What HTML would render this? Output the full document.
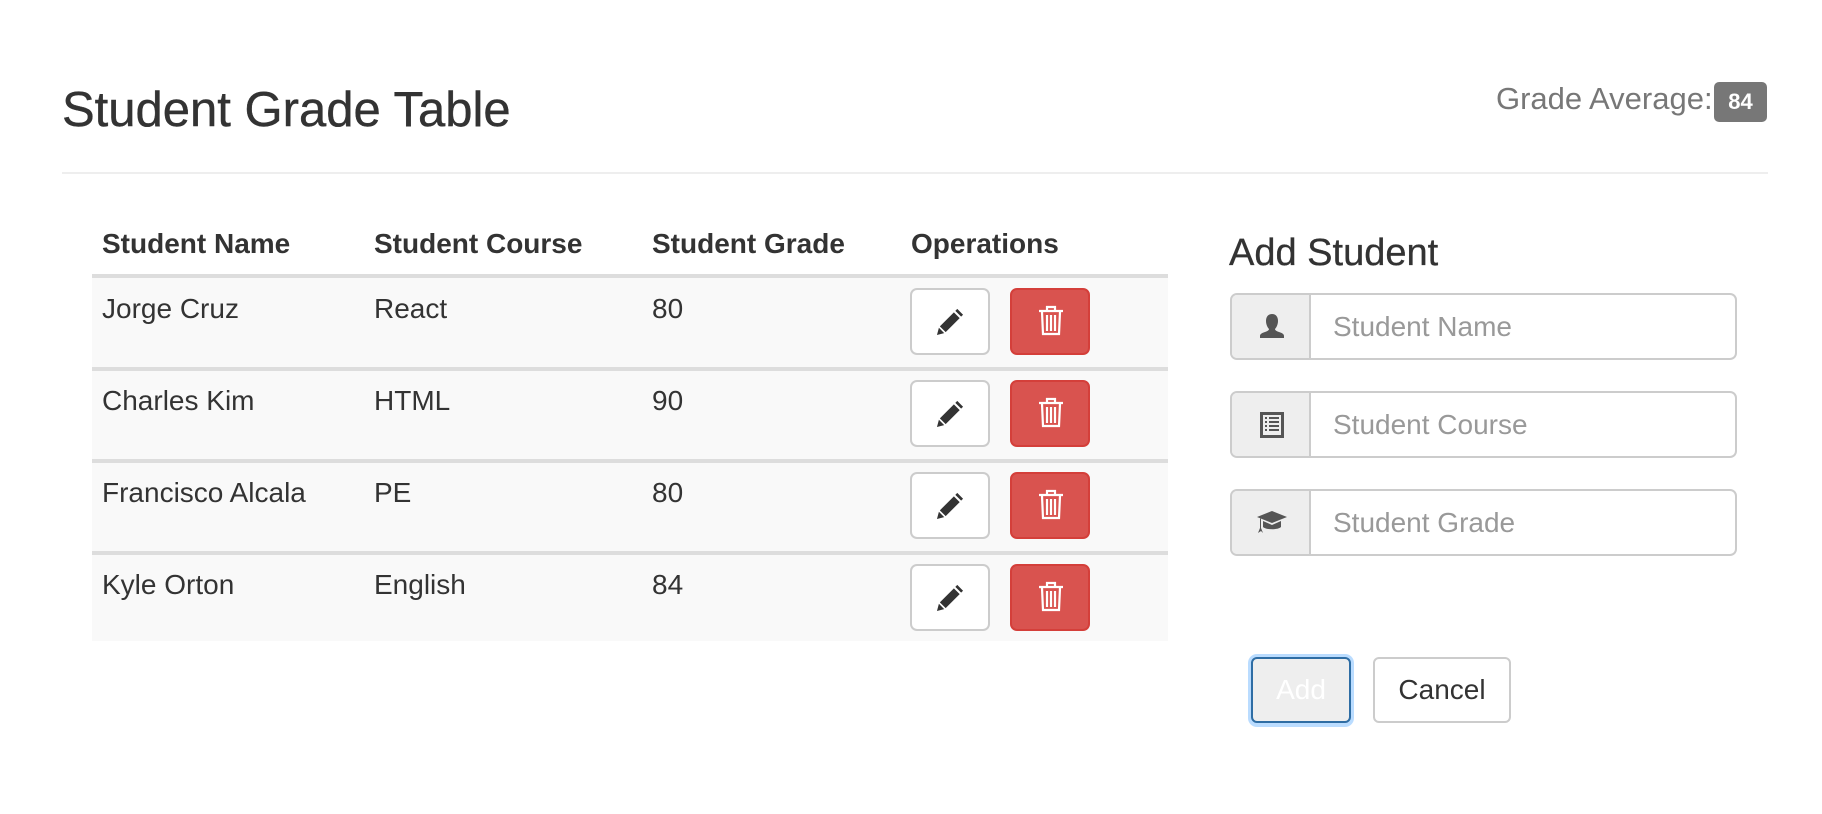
<!DOCTYPE html>
<html><head><meta charset="utf-8"><style>
*{box-sizing:border-box;margin:0;padding:0}
body{width:1822px;height:814px;background:#fff;font-family:"Liberation Sans",Arial,sans-serif;color:#333;position:relative;overflow:hidden}
.a{position:absolute}
.t{font-size:28px;line-height:28px;white-space:nowrap}
.h{font-weight:bold}
.row{position:absolute;left:92px;width:1076px;background:#f9f9f9;border-top:4px solid #ddd}
.eb{position:absolute;width:80px;height:67px;border:2px solid #ccc;border-radius:7px;background:#fff}
.db{position:absolute;width:80px;height:67px;border:2px solid #d43f3a;border-radius:7px;background:#d9534f}
.ig{position:absolute;left:1230px;width:507px;height:67px;border:2px solid #ccc;border-radius:7px;background:#fff;overflow:hidden}
.ad{position:absolute;left:0;top:0;width:79px;height:100%;background:#eee;border-right:2px solid #ccc}
.ph{position:absolute;left:101px;top:17px;font-size:28px;color:#999;line-height:29px;white-space:nowrap}
</style></head><body>
<div class="a" style="left:62px;top:84px;font-size:49px;line-height:52px;white-space:nowrap;-webkit-text-stroke:0.4px">Student Grade Table</div>
<div class="a" style="left:1496px;top:82px;font-size:31px;line-height:34px;color:#777;white-space:nowrap">Grade Average:</div>
<div class="a" style="left:1714px;top:82px;width:53px;height:40px;background:#777;border-radius:5px;color:#fff;font-weight:bold;font-size:22px;line-height:40px;text-align:center">84</div>
<div class="a" style="left:62px;top:172px;width:1706px;height:2px;background:#eee"></div>

<div class="a t h" style="left:102px;top:230px">Student Name</div>
<div class="a t h" style="left:374px;top:230px">Student Course</div>
<div class="a t h" style="left:652px;top:230px">Student Grade</div>
<div class="a t h" style="left:911px;top:230px">Operations</div>

<svg width="0" height="0" style="position:absolute"><defs>
<symbol id="pen" viewBox="0 0 30 30"><path d="M22 2l6 6-2 2-6-6zM18.5 5.5l6 6L10 26l-6-6zM3 21.5l5.5 5.5L1 29z" fill="#333"/></symbol>
<symbol id="trash" viewBox="0 0 26 32"><g fill="none" stroke="#fff" stroke-width="2.2"><path d="M1 7h24M9 7V3h8v4M4 8l1 22h16l1-22M9 11v16M13 11v16M17 11v16"/></g></symbol>
</defs></svg>

<div class="row" style="top:274px;height:93px"></div>
<div class="row" style="top:367px;height:92px"></div>
<div class="row" style="top:459px;height:92px"></div>
<div class="row" style="top:551px;height:90px"></div>

<div class="a t" style="left:102px;top:295px">Jorge Cruz</div>
<div class="a t" style="left:374px;top:295px">React</div>
<div class="a t" style="left:652px;top:295px">80</div>
<div class="a t" style="left:102px;top:387px">Charles Kim</div>
<div class="a t" style="left:374px;top:387px">HTML</div>
<div class="a t" style="left:652px;top:387px">90</div>
<div class="a t" style="left:102px;top:479px">Francisco Alcala</div>
<div class="a t" style="left:374px;top:479px">PE</div>
<div class="a t" style="left:652px;top:479px">80</div>
<div class="a t" style="left:102px;top:571px">Kyle Orton</div>
<div class="a t" style="left:374px;top:571px">English</div>
<div class="a t" style="left:652px;top:571px">84</div>

<div class="eb" style="left:910px;top:288px"><svg class="a" style="left:24px;top:17px" width="29" height="29"><use href="#pen"/></svg></div>
<div class="db" style="left:1010px;top:288px"><svg class="a" style="left:26px;top:14px" width="26" height="32"><use href="#trash"/></svg></div>
<div class="eb" style="left:910px;top:380px"><svg class="a" style="left:24px;top:17px" width="29" height="29"><use href="#pen"/></svg></div>
<div class="db" style="left:1010px;top:380px"><svg class="a" style="left:26px;top:14px" width="26" height="32"><use href="#trash"/></svg></div>
<div class="eb" style="left:910px;top:472px"><svg class="a" style="left:24px;top:17px" width="29" height="29"><use href="#pen"/></svg></div>
<div class="db" style="left:1010px;top:472px"><svg class="a" style="left:26px;top:14px" width="26" height="32"><use href="#trash"/></svg></div>
<div class="eb" style="left:910px;top:564px"><svg class="a" style="left:24px;top:17px" width="29" height="29"><use href="#pen"/></svg></div>
<div class="db" style="left:1010px;top:564px"><svg class="a" style="left:26px;top:14px" width="26" height="32"><use href="#trash"/></svg></div>

<div class="a" style="left:1229px;top:233px;font-size:38px;line-height:40px;white-space:nowrap;-webkit-text-stroke:0.3px">Add Student</div>

<div class="ig" style="top:293px"><div class="ad"><svg class="a" style="left:25px;top:17px" width="30" height="30" viewBox="0 0 30 30"><path d="M15 2c4 0 6 3 6 7s-2 7-3 8c0 1 1 2 4 3s5 2 5 4v2H3v-2c0-2 2-3 5-4s4-2 4-3c-1-1-3-4-3-8s2-7 6-7z" fill="#555"/></svg></div><div class="ph">Student Name</div></div>
<div class="ig" style="top:391px"><div class="ad"><svg class="a" style="left:27px;top:18px" width="26" height="28" viewBox="0 0 26 28"><rect x="1" y="1" width="24" height="26" fill="#555"/><rect x="4" y="4" width="18" height="20" fill="#eee"/><path d="M6 7h2M10 7h10M6 11h2M10 11h10M6 15h2M10 15h10M6 19h2M10 19h10" stroke="#555" stroke-width="2"/></svg></div><div class="ph">Student Course</div></div>
<div class="ig" style="top:489px"><div class="ad"><svg class="a" style="left:24px;top:19px" width="32" height="26" viewBox="0 0 32 26"><path d="M16 1L31 7 16 13 1 7z" fill="#555"/><path d="M7 11v6c3 3 15 3 18 0v-6l-9 4z" fill="#555"/><path d="M4 8v10l-2 5 3-2 2 2-2-5V9" fill="#555"/></svg></div><div class="ph">Student Grade</div></div>

<div class="a" style="left:1248px;top:654px;width:106px;height:73px;border-radius:9px;background:#a9d3ff;opacity:.8"></div>
<div class="a" style="left:1251px;top:657px;width:100px;height:66px;border:2px solid #2e6da4;border-radius:6px;background:#eee;color:#fff;font-size:28px;line-height:62px;text-align:center">Add</div>
<div class="a" style="left:1373px;top:657px;width:138px;height:66px;border:2px solid #ccc;border-radius:6px;background:#fff;color:#333;font-size:28px;line-height:62px;text-align:center">Cancel</div>
</body></html>
